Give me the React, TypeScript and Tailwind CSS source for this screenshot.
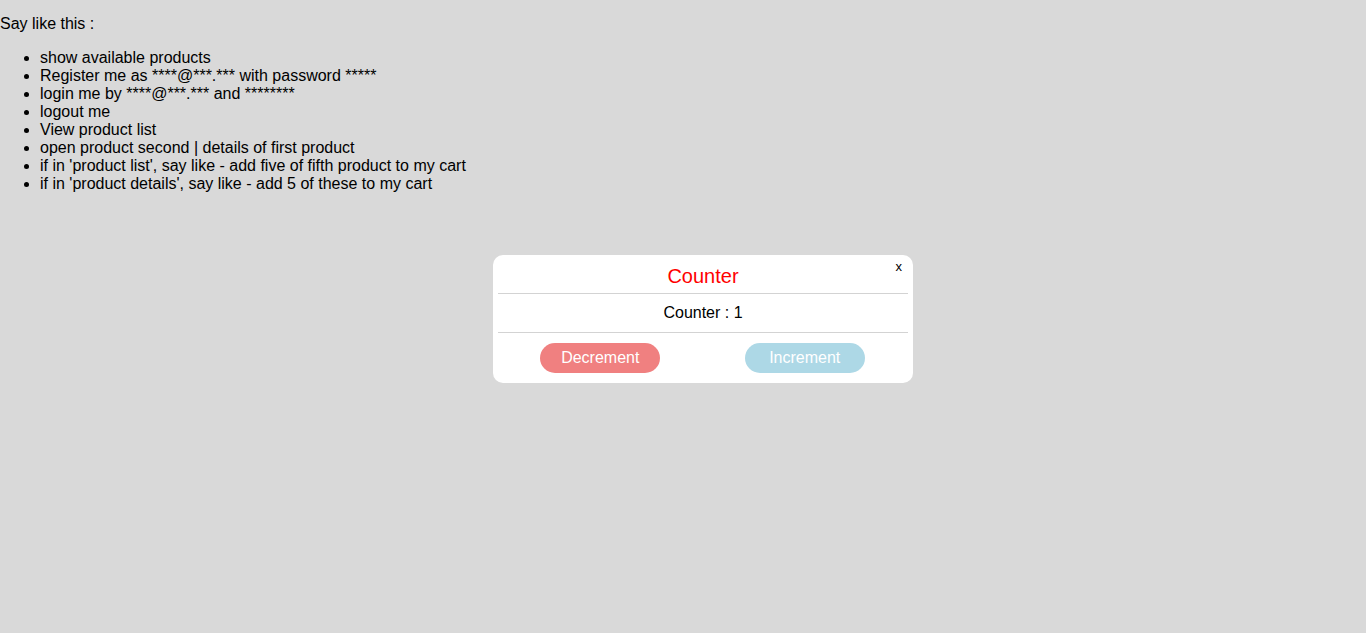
const commands = [
  "show available products",
  "Register me as ****@***.*** with password *****",
  "login me by ****@***.*** and ********",
  "logout me",
  "View product list",
  "open product second | details of first product",
  "if in 'product list', say like - add five of fifth product to my cart",
  "if in 'product details', say like - add 5 of these to my cart",
];

function CounterModal() {
  return (
    <div className="relative w-[420px] rounded-[10px] bg-white p-[5px]">
      <button className="absolute right-[11px] top-[5px] text-[13px] leading-none text-black">
        x
      </button>
      <div className="border-b border-[#d3d3d3] py-[5px] text-center text-[20px] leading-[23px] text-[#ff0000]">
        Counter
      </div>
      <div className="border-b border-[#d3d3d3] py-[10px] text-center text-[16px] leading-[18px] text-black">
        Counter : 1
      </div>
      <div className="flex justify-around pb-[5px] pr-[1px] pt-[10px]">
        <button className="h-[30px] w-[120px] rounded-full bg-[#f08080] text-[16px] text-white">
          Decrement
        </button>
        <button className="h-[30px] w-[120px] rounded-full bg-[#add8e6] text-[16px] text-white">
          Increment
        </button>
      </div>
    </div>
  );
}

export default function App() {
  return (
    <div className="min-h-[633px] bg-[#d9d9d9] font-['Liberation_Sans',Arial,sans-serif] text-[16px] leading-[18px] text-black">
      <p className="pt-[15px]">Say like this :</p>
      <ul className="mt-[16px] list-disc pl-[40px]">
        {commands.map((c) => (
          <li key={c}>{c}</li>
        ))}
      </ul>
      <div className="mt-[62px] flex justify-center pl-[40px]">
        <CounterModal />
      </div>
    </div>
  );
}
